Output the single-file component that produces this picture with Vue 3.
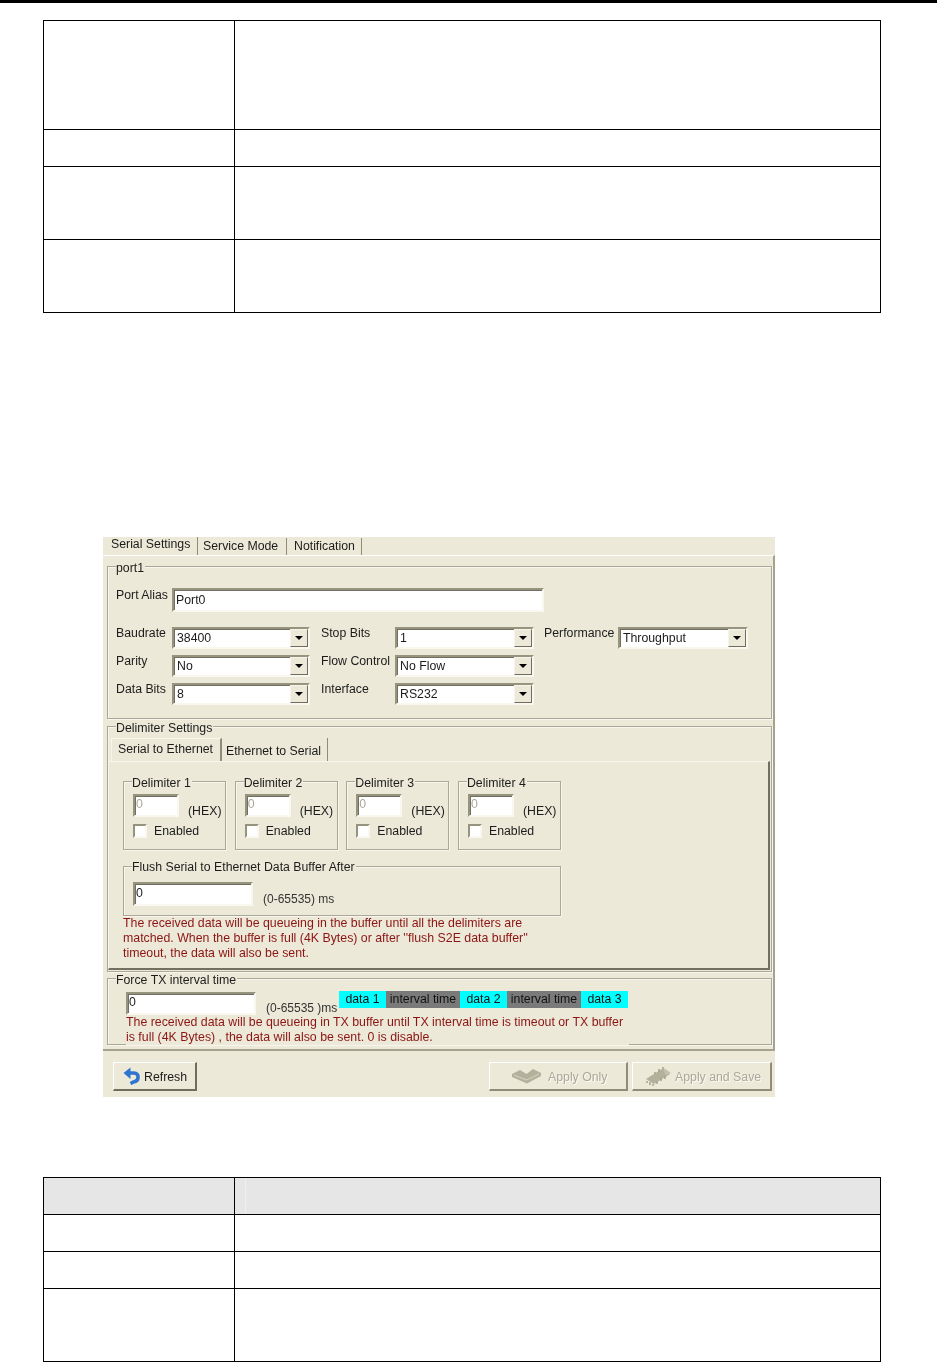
<script setup>
const portRows = [
  { label: 'Baudrate', value: '38400', label2: 'Stop Bits', value2: '1' },
  { label: 'Parity', value: 'No', label2: 'Flow Control', value2: 'No Flow' },
  { label: 'Data Bits', value: '8', label2: 'Interface', value2: 'RS232' }
]
const delimiters = ['Delimiter 1', 'Delimiter 2', 'Delimiter 3', 'Delimiter 4']
const strip = [
  { text: 'data 1', kind: 'data' },
  { text: 'interval time', kind: 'gap' },
  { text: 'data 2', kind: 'data' },
  { text: 'interval time', kind: 'gap' },
  { text: 'data 3', kind: 'data' }
]
</script>

<template>
  <div class="page">
    <div class="topbar"></div>

    <div class="tbl first">
      <div class="row h109"><div class="cell"></div><div class="cell"></div></div>
      <div class="row h37"><div class="cell"></div><div class="cell"></div></div>
      <div class="row h73"><div class="cell"></div><div class="cell"></div></div>
      <div class="row h73"><div class="cell"></div><div class="cell"></div></div>
    </div>

    <div class="window">
      <div class="tabs">
        <div class="tab active">Serial Settings</div>
        <div class="tab service">Service Mode</div>
        <div class="tab notify">Notification</div>
      </div>

      <div class="panel">
        <div class="group port">
          <span class="legend">port1</span>
          <div class="alias">
            <span class="lbl alias-lbl">Port Alias</span>
            <div class="input alias-input">Port0</div>
          </div>
          <div class="port-grid">
            <template v-for="(r, i) in portRows" :key="r.label">
              <span class="lbl">{{ r.label }}</span>
              <div class="select">
                <span class="sel-text">{{ r.value }}</span>
                <span class="sel-btn"><i class="tri"></i></span>
              </div>
              <span class="lbl second">{{ r.label2 }}</span>
              <div class="select">
                <span class="sel-text">{{ r.value2 }}</span>
                <span class="sel-btn"><i class="tri"></i></span>
              </div>
              <template v-if="i === 0">
                <span class="lbl third">Performance</span>
                <div class="select">
                  <span class="sel-text">Throughput</span>
                  <span class="sel-btn"><i class="tri"></i></span>
                </div>
              </template>
              <span v-else class="filler"></span>
            </template>
          </div>
        </div>

        <div class="group delim">
          <span class="legend">Delimiter Settings</span>
          <div class="inner-tabs">
            <div class="itab active">Serial to Ethernet</div>
            <div class="itab other">Ethernet to Serial</div>
          </div>
          <div class="inner-panel">
            <div class="delim-grid">
              <div v-for="d in delimiters" :key="d" class="group dbox">
                <span class="legend">{{ d }}</span>
                <div class="dbox-row">
                  <div class="input dis">0</div>
                  <span class="hex">(HEX)</span>
                </div>
                <div class="check-row">
                  <span class="check"></span>
                  <span>Enabled</span>
                </div>
              </div>
            </div>
            <div class="group flush">
              <span class="legend">Flush Serial to Ethernet Data Buffer After</span>
              <div class="flush-row">
                <div class="input flush-input">0</div>
                <span class="range">(0-65535) ms</span>
              </div>
            </div>
            <p class="note">The received data will be queueing in the buffer until all the delimiters are<br>matched. When the buffer is full (4K Bytes) or after ''flush S2E data buffer''<br>timeout, the data will also be sent.</p>
          </div>
        </div>

        <div class="group force">
          <span class="legend">Force TX interval time</span>
          <div class="force-row">
            <div class="input force-input">0</div>
            <span class="range force-range">(0-65535 )ms</span>
            <div class="strip">
              <span v-for="(s, i) in strip" :key="i" :class="['seg', s.kind]">{{ s.text }}</span>
            </div>
          </div>
          <p class="note force-note">The received data will be queueing in TX buffer until TX interval time is timeout or TX buffer<br>is full (4K Bytes) , the data will also be sent. 0 is disable.</p>
        </div>
      </div>

      <div class="actions">
        <div class="btn refresh">
          <svg width="18" height="18" viewBox="0 0 18 18" class="ico">
            <path d="M6 6 H11 C16.5 6 16.5 14 10.5 15 L7.5 16.5" fill="none" stroke="#2f74d0" stroke-width="3.6"/>
            <path d="M0.5 6 L7.5 0.5 V12 Z" fill="#2f74d0"/>
          </svg>
          <span class="btn-text">Refresh</span>
        </div>
        <div class="spacer"></div>
        <div class="btn off apply">
          <svg width="29" height="16" viewBox="0 0 29 16" class="ico">
            <path d="M0 6 L8 2 L14.5 6 L21 1 L29 5 L29 8 L15 15.5 L0 9 Z" fill="#b3b09c"/>
            <path d="M2 7 L14.5 12 L27 6" fill="none" stroke="#d8d5c4" stroke-width="1"/>
          </svg>
          <span class="btn-text">Apply Only</span>
        </div>
        <div class="btn off save">
          <svg width="26" height="20" viewBox="0 0 26 20" class="ico">
            <path d="M1 13 L17 3 L25 8 L9 18 Z" fill="#b3b09c"/>
            <path d="M2 15 V17 M5 16 V19 M8 18 V20 M12 15 V18 M16 12 V15 M20 10 V13 M18 1 V4 M14 3 V6 M10 6 V8" stroke="#a09d8a" stroke-width="1.4"/>
            <path d="M19 2 L26 7 L20 9 Z" fill="#c4c1ae"/>
          </svg>
          <span class="btn-text">Apply and Save</span>
        </div>
      </div>
    </div>

    <div class="tbl second-tbl">
      <div class="row h37 head"><div class="cell"></div><div class="cell mark"></div></div>
      <div class="row h37"><div class="cell"></div><div class="cell"></div></div>
      <div class="row h37"><div class="cell"></div><div class="cell"></div></div>
      <div class="row h73"><div class="cell"></div><div class="cell"></div></div>
    </div>
  </div>
</template>

<style scoped>
.page {
  width: 937px;
  height: 1362px;
  overflow: hidden;
  background: #fff;
  font-family: "Liberation Sans", Arial, sans-serif;
  font-size: 12.3px;
  color: #1c1c1c;
}
.topbar { height: 3px; background: #000; }

.tbl {
  width: 838px;
  margin-left: 43px;
  border-top: 1px solid #000;
  border-left: 1px solid #000;
  box-sizing: border-box;
}
.first { margin-top: 17px; }
.second-tbl { margin-top: 80px; }
.row { display: grid; grid-template-columns: 191px 1fr; box-sizing: border-box; }
.h37 { height: 37px; }
.h73 { height: 73px; }
.h109 { height: 109px; }
.cell { border-right: 1px solid #000; border-bottom: 1px solid #000; box-sizing: border-box; }
.head .cell { background: #e6e6e6; }
.mark { position: relative; }
.mark::before {
  content: "";
  position: absolute;
  left: 10px;
  top: 0;
  bottom: 0;
  width: 1px;
  background: #efefef;
}

.window {
  width: 672px;
  height: 560px;
  margin: 224px 0 0 103px;
  background: #ece9d8;
  box-sizing: border-box;
  line-height: 14px;
  filter: blur(0.35px);
}

.tabs { display: flex; height: 18px; }
.tab {
  box-sizing: border-box;
  height: 17px;
  padding-top: 1px;
  border-right: 1px solid #8f8c7a;
  margin-top: 1px;
  white-space: nowrap;
}
.tab.active { width: 95px; height: 18px; padding: 0 0 0 8px; margin-top: 0; }
.tab.service { width: 89px; padding-left: 5px; }
.tab.notify { width: 75px; padding-left: 7px; }

.panel {
  box-sizing: border-box;
  height: 496px;
  padding: 10px 0 0 4px;
  border-top: 1px solid #fff;
  border-right: 2px solid #a5a28f;
  border-bottom: 2px solid #a5a28f;
}

.group {
  position: relative;
  box-sizing: border-box;
  border: 1px solid #aca899;
  box-shadow: inset 1px 1px 0 #f8f6ec, 1px 1px 0 #f8f6ec;
}
.legend {
  position: absolute;
  top: -6px;
  left: 8px;
  padding: 0 1px 0 0;
  background: #ece9d8;
  white-space: nowrap;
}

.port { width: 665px; height: 153px; padding: 21px 0 0 8px; }
.alias { display: flex; }
.lbl { line-height: 13px; white-space: nowrap; }
.alias-lbl { width: 56px; padding-top: 1px; }

.input {
  box-sizing: border-box;
  background: #fff;
  border: 2px solid;
  border-color: #96937f #f9f8f0 #f9f8f0 #96937f;
  box-shadow: inset 1px 1px 0 #716f5f;
  white-space: nowrap;
}
.alias-input { width: 372px; height: 24px; padding: 3px 0 0 2px; }

.port-grid {
  display: grid;
  grid-template-columns: 56px 138px 85px 139px 84px 130px;
  grid-auto-rows: 22px;
  row-gap: 6px;
  margin-top: 15px;
}
.filler { grid-column: span 2; }
.second { padding-left: 11px; }
.third { padding-left: 10px; }
.select {
  box-sizing: border-box;
  display: flex;
  justify-content: space-between;
  background: #fff;
  border: 2px solid;
  border-color: #96937f #f9f8f0 #f9f8f0 #96937f;
  box-shadow: inset 1px 1px 0 #716f5f;
}
.sel-text { padding: 2px 0 0 3px; white-space: nowrap; }
.sel-btn {
  box-sizing: border-box;
  width: 18px;
  height: 18px;
  display: flex;
  align-items: center;
  justify-content: center;
  background: #ece9d8;
  border: 1px solid;
  border-color: #f7f5ea #6f6d5e #6f6d5e #f7f5ea;
}
.tri {
  display: block;
  width: 0;
  height: 0;
  border-style: solid;
  border-width: 4px 4px 0 4px;
  border-color: #000 transparent transparent transparent;
}

.delim { width: 665px; height: 246px; margin-top: 7px; padding: 11px 0 0 0; }
.inner-tabs { display: flex; height: 23px; }
.itab { box-sizing: border-box; white-space: nowrap; }
.itab.active {
  width: 111px;
  margin-left: 3px;
  padding: 3px 0 0 6px;
  border-top: 1px solid #f8f6ec;
  border-left: 1px solid #f8f6ec;
  border-right: 2px solid #8f8c7a;
}
.itab.other { padding: 6px 0 0 4px; width: 106px; margin-left: 0; border-right: 1px solid #8f8c7a; height: 23px; }
.inner-panel {
  box-sizing: border-box;
  width: 662px;
  height: 209px;
  padding: 19px 0 0 14px;
  border-top: 1px solid #f8f6ec;
  border-left: 1px solid #f8f6ec;
  border-right: 2px solid #716f60;
  border-bottom: 2px solid #716f60;
}
.delim-grid { display: grid; grid-template-columns: repeat(4, 103px); column-gap: 8.67px; }
.dbox { height: 69px; padding: 12px 0 0 9px; }
.dbox-row { display: flex; height: 23px; }
.input.dis { width: 46px; height: 23px; padding: 1px 0 0 1px; color: #aca899; }
.hex { margin: 10px 0 0 9px; white-space: nowrap; }
.check-row { display: flex; align-items: center; gap: 7px; margin-top: 7px; height: 14px; }
.check {
  box-sizing: border-box;
  width: 14px;
  height: 14px;
  background: #fff;
  border: 2px solid;
  border-color: #96937f #f9f8f0 #f9f8f0 #96937f;
}
.flush { width: 438px; height: 50px; margin-top: 16px; padding: 15px 0 0 9px; }
.flush .legend { top: -7px; }
.flush-row { display: flex; align-items: flex-end; }
.flush-input { width: 120px; height: 24px; padding: 2px 0 0 1px; }
.range { margin-left: 10px; font-size: 12px; white-space: nowrap; color: #333; }
.note {
  margin: 0;
  color: #8c1414;
  font-size: 12.35px;
  line-height: 15px;
  white-space: nowrap;
}

.force { width: 665px; height: 67px; margin-top: 6px; padding: 13px 0 0 18px; }
.force-row { display: flex; align-items: flex-start; height: 23px; }
.force-input { width: 130px; height: 23px; padding: 1px 0 0 1px; }
.force-range { margin-top: 9px; width: 73px; flex: none; }
.strip { display: flex; margin-top: -1px; height: 17px; }
.seg { line-height: 16px; text-align: center; color: #111; white-space: nowrap; }
.seg.data { width: 47px; background: #00ffff; }
.seg.gap { width: 74px; background: #7a7a7a; }
.force-note {
  position: relative;
  width: 503px;
  height: 30px;
  padding-top: 0;
  background: #ece9d8;
}

.actions { display: flex; padding: 11px 3px 0 10px; }
.spacer { flex: 1; }
.btn {
  box-sizing: border-box;
  height: 29px;
  display: flex;
  align-items: center;
  background: #ece9d8;
  border: 1px solid;
  border-color: #fff #6f6d5e #6f6d5e #fff;
  border-width: 1px 2px 2px 1px;
  white-space: nowrap;
}
.btn-text { padding-top: 2px; }
.refresh { width: 84px; padding-left: 9px; gap: 3px; }
.off { color: #aca899; text-shadow: 1px 1px 0 #fbfaf3; border-color: #fff #8f8c7a #8f8c7a #fff; }
.apply { width: 139px; padding-left: 22px; gap: 7px; margin-right: 4px; }
.save { width: 140px; padding-left: 12px; gap: 4px; }
.ico { flex: none; }
</style>
